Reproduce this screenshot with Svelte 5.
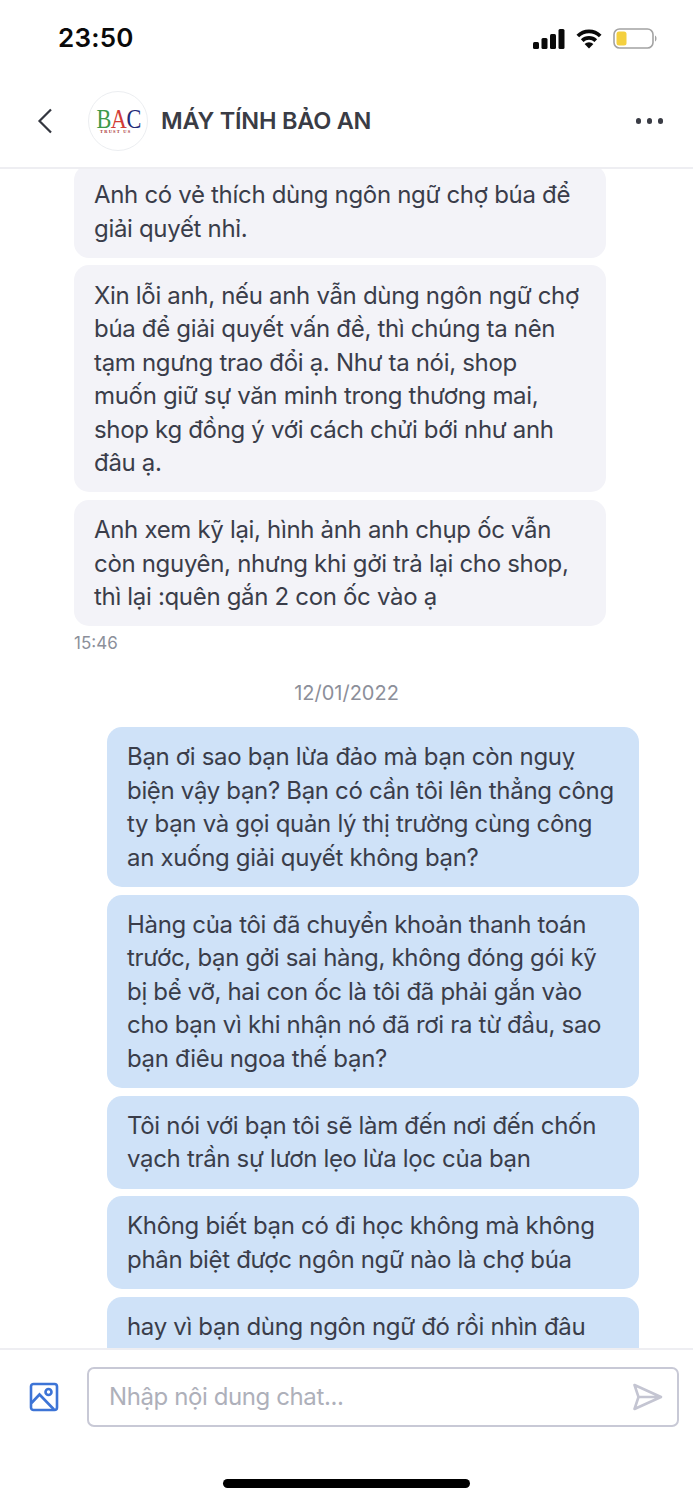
<script>
  const received = [
    ["Anh có vẻ thích dùng ngôn ngữ chợ búa để", "giải quyết nhỉ."],
    ["Xin lỗi anh, nếu anh vẫn dùng ngôn ngữ chợ", "búa để giải quyết vấn đề, thì chúng ta nên", "tạm ngưng trao đổi ạ. Như ta nói, shop", "muốn giữ sự văn minh trong thương mai,", "shop kg đồng ý với cách chửi bới như anh", "đâu ạ."],
    ["Anh xem kỹ lại, hình ảnh anh chụp ốc vẫn", "còn nguyên, nhưng khi gởi trả lại cho shop,", "thì lại :quên gắn 2 con ốc vào ạ"]
  ];
  const sent = [
    ["Bạn ơi sao bạn lừa đảo mà bạn còn nguỵ", "biện vậy bạn? Bạn có cần tôi lên thẳng công", "ty bạn và gọi quản lý thị trường cùng công", "an xuống giải quyết không bạn?"],
    ["Hàng của tôi đã chuyển khoản thanh toán", "trước, bạn gởi sai hàng, không đóng gói kỹ", "bị bể vỡ, hai con ốc là tôi đã phải gắn vào", "cho bạn vì khi nhận nó đã rơi ra từ đầu, sao", "bạn điêu ngoa thế bạn?"],
    ["Tôi nói với bạn tôi sẽ làm đến nơi đến chốn", "vạch trần sự lươn lẹo lừa lọc của bạn"],
    ["Không biết bạn có đi học không mà không", "phân biệt được ngôn ngữ nào là chợ búa"],
    ["hay vì bạn dùng ngôn ngữ đó rồi nhìn đâu"]
  ];
</script>

<div class="phone">
  <div class="status">
    <span class="clock">23:50</span>
    <div class="indicators">
      <svg width="32" height="20" viewBox="0 0 32 20" aria-hidden="true">
        <rect x="0" y="13" width="6" height="7" rx="1.5" />
        <rect x="8.5" y="9" width="6" height="11" rx="1.5" />
        <rect x="17" y="5" width="6" height="15" rx="1.5" />
        <rect x="25.5" y="0" width="6" height="20" rx="1.5" />
      </svg>
      <svg class="wifi" width="26" height="20" viewBox="0 0 26 20" aria-hidden="true">
        <path d="M1.8 7 A16 16 0 0 1 24.2 7" />
        <path d="M6.2 11.6 A9.8 9.8 0 0 1 19.8 11.6" />
        <path class="dot" d="M13 19.5 L8.6 15 A6.4 6.4 0 0 1 17.4 15 Z" />
      </svg>
      <svg class="battery" width="44" height="21" viewBox="0 0 44 21" aria-hidden="true">
        <rect class="shell" x="1" y="1" width="39" height="19" rx="5.5" />
        <rect class="charge" x="3.5" y="3.5" width="10" height="14" rx="2.5" />
        <path class="cap" d="M42 7.5 C44 8.5 44 12.5 42 13.5 Z" />
      </svg>
    </div>
  </div>

  <header class="topbar">
    <svg class="back" width="16" height="26" viewBox="0 0 16 26" aria-hidden="true">
      <path d="M14 1.5 L2.5 13 L14 24.5" />
    </svg>
    <div class="avatar">
      <svg width="48" height="36" viewBox="0 0 48 36" aria-hidden="true">
        <text class="l" transform="translate(2.5 24.5) scale(0.84 1)"><tspan fill="#3d9a4a">B</tspan><tspan fill="#d23b36">A</tspan><tspan fill="#232a78">C</tspan></text>
        <text class="sub" x="6" y="29.5">TRUST US</text>
      </svg>
    </div>
    <h1 class="name">MÁY TÍNH BẢO AN</h1>
    <div class="more"><i></i><i></i><i></i></div>
  </header>

  <main class="thread">
    <div class="group left">
      {#each received as lines}
        <div class="bubble in">
          {#each lines as line}<div class="line">{line}</div>{/each}
        </div>
      {/each}
    </div>
    <div class="time">15:46</div>
    <div class="date">12/01/2022</div>
    <div class="group right">
      {#each sent as lines, i}
        <div class="bubble out" class:tail={i === sent.length - 1}>
          {#each lines as line}<div class="line">{line}</div>{/each}
        </div>
      {/each}
    </div>
  </main>

  <footer class="composer">
    <div class="inputrow">
      <svg class="pic" width="30" height="30" viewBox="0 0 30 30" aria-hidden="true">
        <rect x="2" y="2" width="26" height="26" rx="2.5" />
        <circle cx="19.5" cy="10" r="3" />
        <path d="M2.5 21 L10.5 12.5 L25 27.5" />
      </svg>
      <div class="field">
        <span class="placeholder">Nhập nội dung chat...</span>
        <svg class="send" width="32" height="28" viewBox="0 0 32 28" aria-hidden="true">
          <path d="M3.5 2 L30 14 L3.5 26 L7.5 14 Z M7.5 14 L30 14" />
        </svg>
      </div>
    </div>
    <div class="home"></div>
  </footer>
</div>

<style>
  :global(body) {
    margin: 0;
    background: #fff;
  }
  .phone {
    width: 693px;
    height: 1500px;
    display: flex;
    flex-direction: column;
    overflow: hidden;
    font-family: Inter, "Noto Sans", sans-serif;
    color: #3a3d4a;
    background: #fff;
  }
  .status {
    height: 75px;
    flex: none;
    box-sizing: border-box;
    padding: 24px 36px 0 58px;
    display: flex;
    justify-content: space-between;
    align-items: flex-start;
  }
  .clock {
    font-size: 26px;
    line-height: 28px;
    font-weight: 600;
    color: #0a0a0a;
    letter-spacing: 0.2px;
  }
  .indicators {
    display: flex;
    align-items: center;
    gap: 11px;
    padding-top: 4px;
  }
  .indicators rect { fill: #0a0a0a; }
  .wifi path {
    fill: none;
    stroke: #0a0a0a;
    stroke-width: 3.8;
  }
  .wifi .dot { fill: #0a0a0a; stroke: none; }
  .indicators .battery .shell {
    fill: #fff;
    stroke: #a3a3a3;
    stroke-width: 1.6;
  }
  .indicators .battery .charge { fill: #f4d03f; }
  .battery .cap { fill: #a3a3a3; }

  .topbar {
    height: 94px;
    flex: none;
    box-sizing: border-box;
    border-bottom: 2px solid #eeeef2;
    display: flex;
    align-items: center;
    padding: 0 30px 0 37px;
    position: relative;
    z-index: 1;
    background: #fff;
  }
  .back path {
    fill: none;
    stroke: #33363f;
    stroke-width: 2.2;
  }
  .avatar {
    width: 60px;
    height: 60px;
    box-sizing: border-box;
    border: 1.5px solid #eceef1;
    border-radius: 50%;
    margin-left: 35px;
    display: flex;
    align-items: center;
    justify-content: center;
    flex: none;
  }
  .avatar svg { display: block; }
  .avatar .l {
    font-family: "Liberation Serif", serif;
    font-size: 26.5px;
    letter-spacing: -0.6px;
  }
  .avatar .sub {
    font-family: "Liberation Serif", serif;
    font-size: 4.5px;
    font-weight: 700;
    fill: #a8322e;
    letter-spacing: 1.2px;
  }
  .name {
    margin: 0 0 0 13px;
    font-size: 23.5px;
    line-height: 30px;
    font-weight: 600;
    letter-spacing: -0.22px;
    color: #3a3c45;
    flex: 1;
  }
  .more {
    display: flex;
    gap: 5.5px;
  }
  .more i {
    display: block;
    width: 5.5px;
    height: 5.5px;
    border-radius: 50%;
    background: #3a3c45;
  }

  .thread {
    flex: 1;
    min-height: 0;
    overflow: hidden;
    display: flex;
    flex-direction: column;
    margin-top: -4.2px;
  }
  .group {
    display: flex;
    flex-direction: column;
    gap: 7.5px;
    flex: none;
  }
  .left { margin: 0 87px 0 74px; }
  .right { margin: 0 54px 0 107px; }
  .bubble {
    border-radius: 15px;
    padding: 13.25px 20px 12.75px;
    font-size: 24px;
    line-height: 33.5px;
    letter-spacing: -0.32px;
    white-space: nowrap;
    color: #3a3d4a;
  }
  .tail { min-height: 80px; }
  .in { background: #f3f3f8; }
  .out { background: #cfe2f8; }
  .time {
    flex: none;
    margin: 6.2px 0 0 74px;
    font-size: 17px;
    line-height: 20px;
    color: #8c8f9a;
  }
  .date {
    flex: none;
    margin-top: 28.5px;
    margin-bottom: 22px;
    text-align: center;
    font-size: 20px;
    line-height: 24px;
    color: #8c8f9a;
  }

  .composer {
    height: 152px;
    flex: none;
    box-sizing: border-box;
    border-top: 2px solid #eeeef2;
    background: #fff;
    display: flex;
    flex-direction: column;
    align-items: center;
    position: relative;
  }
  .inputrow {
    width: 100%;
    box-sizing: border-box;
    display: flex;
    align-items: center;
    padding: 17px 14px 0 29px;
    gap: 28px;
  }
  .pic { flex: none; }
  .pic rect, .pic circle, .pic path {
    fill: none;
    stroke: #3d74d6;
    stroke-width: 2.6;
  }
  .field {
    flex: 1;
    height: 60px;
    box-sizing: border-box;
    border: 2px solid #c8c9d6;
    border-radius: 7px;
    display: flex;
    align-items: center;
    justify-content: space-between;
    padding: 0 14px 0 20px;
  }
  .placeholder {
    font-size: 24px;
    line-height: 30px;
    letter-spacing: -0.4px;
    color: #aeb0ba;
  }
  .send path {
    fill: none;
    stroke: #c4c5d2;
    stroke-width: 2.6;
    stroke-linejoin: round;
  }
  .home {
    width: 247px;
    height: 9px;
    border-radius: 5px;
    background: #000;
    margin-top: 52px;
  }
</style>
